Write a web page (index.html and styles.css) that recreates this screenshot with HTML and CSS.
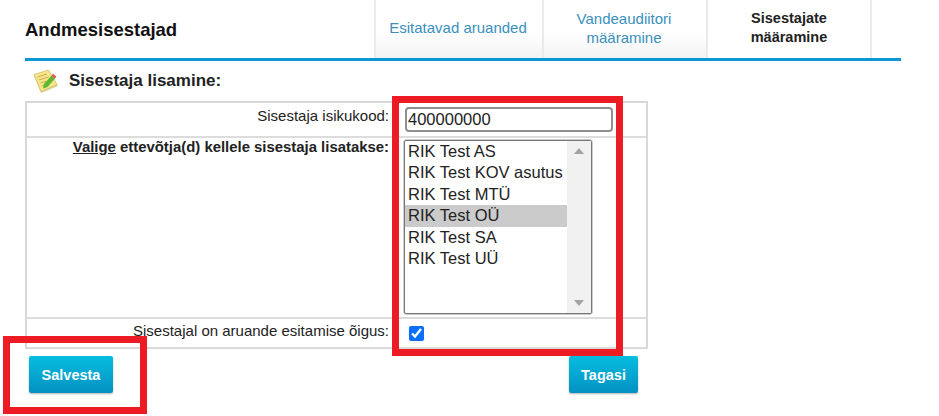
FILE: index.html
```html
<!DOCTYPE html>
<html lang="en">
<head>
    <meta charset="UTF-8">
    <meta name="viewport" content="width=device-width, initial-scale=1.0">
    <title>Andmesisestajad</title>
    <link rel="stylesheet" href="styles.css">
</head>
<body>
    <div class="page">
        <header class="top">
            <h1>Andmesisestajad</h1>
            <nav class="tabs">
                <a href="#" class="tab tab-1">Esitatavad aruanded</a>
                <a href="#" class="tab tab-2">Vandeaudiitori<br>määramine</a>
                <a href="#" class="tab tab-3 active">Sisestajate<br>määramine</a>
            </nav>
        </header>

        <h2 class="section-title">
            <svg class="note-icon" width="26" height="25" viewBox="0 0 26 25">
                <path d="M1 7 L16 2 L25 17 L8 24 Z" fill="#d9cf9a"/>
                <path d="M1 5.500 L15.500 1 L24 15.500 L8 22.500 Z" fill="#f7e58c" stroke="#d8bf62" stroke-width="0.800"/>
                <path d="M4.500 8 L14 5 M6 11 L15.500 8 M7.500 14 L13 12.300 M9 17 L12 16" stroke="#c9a94e" stroke-width="1"/>
                <path d="M10 19.500 L11 15 L18.500 6.500 L22 9.500 L14.500 18 Z" fill="#5cb82e"/>
                <path d="M18.500 6.500 L20 4.800 L23.500 7.800 L22 9.500 Z" fill="#e0574a"/>
            </svg>
            Sisestaja lisamine:
        </h2>

        <div class="form-table">
            <div class="form-row row-code">
                <label class="form-label" for="code">Sisestaja isikukood:</label>
                <div class="form-field"><input id="code" class="text-input" type="text" value="400000000"></div>
            </div>
            <div class="form-row row-list">
                <div class="form-label"><u>Valige</u> ettevõtja(d) kellele sisestaja lisatakse:</div>
                <div class="form-field">
                    <div class="list-box">
                        <ul class="list-items">
                            <li>RIK Test AS</li>
                            <li>RIK Test KOV asutus</li>
                            <li>RIK Test MTÜ</li>
                            <li class="selected">RIK Test OÜ</li>
                            <li>RIK Test SA</li>
                            <li>RIK Test UÜ</li>
                        </ul>
                        <div class="scrollbar">
                            <span class="arrow-up"></span>
                            <span class="arrow-down"></span>
                        </div>
                    </div>
                </div>
            </div>
            <div class="form-row row-check">
                <label class="form-label" for="right">Sisestajal on aruande esitamise õigus:</label>
                <div class="form-field"><input id="right" class="check" type="checkbox" checked></div>
            </div>
        </div>

        <div class="buttons">
            <button class="btn btn-save">Salvesta</button>
            <button class="btn btn-back">Tagasi</button>
        </div>
    </div>

    <div class="mark mark-form"></div>
    <div class="mark mark-save"></div>
</body>
</html>
```

FILE: styles.css
```css
html, body {
    margin: 0;
    padding: 0;
    height: 416px;
    overflow: hidden;
    background-color: #fff;
}

body {
    font-family: "Liberation Sans", Arial, sans-serif;
    color: #222;
    position: relative;
}

.page {
    width: 876px;
    margin-left: 25px;
}

.top {
    display: flex;
    justify-content: space-between;
    height: 58px;
    border-bottom: 3px solid #0a97d4;
}

h1 {
    margin: 0;
    font-size: 18.500px;
    line-height: 59px;
    color: #111;
}

.tabs {
    display: flex;
    margin-right: 29px;
}

.tab {
    display: flex;
    align-items: center;
    justify-content: center;
    text-align: center;
    font-size: 15px;
    line-height: 19px;
    color: #3a8fbd;
    text-decoration: none;
    border-left: 2px solid #e8ebec;
    box-sizing: border-box;
    padding-bottom: 3px;
    padding-right: 2px;
    background: linear-gradient(#fff 55%, #f3f3f3);
}

.tab-1 { width: 168px; }
.tab-2 { width: 164px; }
.tab-3 {
    width: 166px;
    border-right: 2px solid #e8ebec;
    padding-right: 0;
}

.tab.active {
    background: #fff;
    color: #222;
    font-size: 14.500px;
    font-weight: bold;
}

.section-title {
    display: flex;
    align-items: center;
    gap: 10px;
    margin: 0;
    padding-left: 8px;
    height: 40px;
    font-size: 17px;
    color: #222;
}

.form-table {
    width: 623px;
    box-sizing: border-box;
    border: 2px solid #d8d8d8;
    border-bottom-width: 1px;
}

.form-row {
    display: grid;
    grid-template-columns: 362px 1fr;
    font-size: 15px;
    border-bottom: 2px solid #dcdcdc;
}

.row-code { height: 33px; }
.row-list { height: 179px; }
.row-check { height: 28px; border-bottom: 1px solid #dcdcdc; }

.form-label {
    text-align: right;
    padding-top: 4px;
}

.row-list .form-label {
    font-size: 14.900px;
    font-weight: bold;
    padding-top: 1px;
}

.row-check .form-label {
    padding-top: 3px;
}

.form-field {
    padding-left: 15px;
}

.text-input {
    display: block;
    box-sizing: border-box;
    width: 208px;
    height: 25px;
    margin-top: 4px;
    margin-left: 1px;
    padding: 0 1px;
    border: 2px solid #8f8f8f;
    border-radius: 4px;
    font-family: inherit;
    font-size: 16.500px;
    color: #222;
}

.list-box {
    display: flex;
    box-sizing: border-box;
    width: 188px;
    height: 174px;
    margin-top: 2px;
    border: 1px solid #777;
    border-radius: 2px;
    box-shadow: 0 0 0 0.5px #999;
}

.list-items {
    flex: 1;
    margin: 0;
    padding: 0;
    list-style: none;
    font-size: 16.500px;
}

.list-items li {
    height: 21.400px;
    line-height: 21.400px;
    padding-left: 3px;
    white-space: nowrap;
}

.list-items li.selected {
    background-color: #cbcbcb;
}

.scrollbar {
    display: flex;
    flex-direction: column;
    justify-content: space-between;
    align-items: center;
    width: 24px;
    background-color: #f1f1f1;
    padding: 7px 0;
    box-sizing: border-box;
}

.arrow-up {
    border-left: 5px solid transparent;
    border-right: 5px solid transparent;
    border-bottom: 6px solid #a3a3a3;
}

.arrow-down {
    border-left: 5px solid transparent;
    border-right: 5px solid transparent;
    border-top: 6px solid #a3a3a3;
}

.check {
    display: block;
    width: 15px;
    height: 15px;
    margin: 7px 0 0 5px;
    accent-color: #0b6ffd;
}

.buttons {
    display: flex;
    justify-content: space-between;
    width: 613px;
    margin-top: 7px;
    padding-left: 4px;
    box-sizing: border-box;
}

.btn {
    height: 37px;
    padding: 0;
    border: none;
    border-radius: 2px;
    background: linear-gradient(#07bde0, #0391c1);
    box-shadow: 0 1px 2px rgba(0, 0, 0, 0.3);
    color: #fff;
    font-family: inherit;
    font-size: 14.500px;
    font-weight: bold;
}

.btn-save { width: 84px; }
.btn-back { width: 69px; }

/* red annotation frames on top of the page */
.mark {
    position: absolute;
    box-sizing: border-box;
    border: 7px solid #ed1c24;
}

.mark-form {
    left: 392px;
    top: 96px;
    width: 231px;
    height: 260px;
}

.mark-save {
    left: 3px;
    top: 336px;
    width: 144px;
    height: 78px;
}
```
